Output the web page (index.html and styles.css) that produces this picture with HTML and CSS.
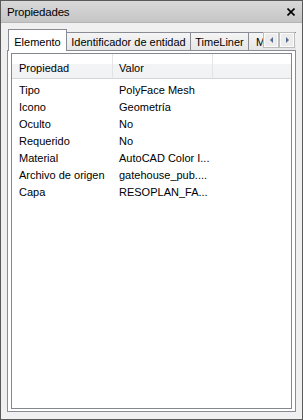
FILE: index.html
```html
<!DOCTYPE html>
<html>
<head>
<meta charset="utf-8">
<link rel="stylesheet" href="styles.css">
</head>
<body>
<div class="window">
  <div class="titlebar">
    <span class="title">Propiedades</span>
    <svg class="close" width="8" height="8" viewBox="0 0 8 8"><path d="M0.5 0.5L7.5 7.5M7.5 0.5L0.5 7.5" stroke="#000" stroke-width="1.6" fill="none"/></svg>
  </div>
  <div class="content">
    <div class="tabstrip">
      <div class="tab sel w1">Elemento</div>
      <div class="tab w2">Identificador de entidad</div>
      <div class="tab w3">TimeLiner</div>
      <div class="tab w4">M</div>
      <div class="scroll">
        <div class="sbtn"><span class="arr left"></span></div>
        <div class="sbtn"><span class="arr right"></span></div>
      </div>
    </div>
    <div class="panel">
      <div class="list">
        <div class="header">
          <div class="hc c1">Propiedad</div>
          <div class="hc c2">Valor</div>
          <div class="hc c3"></div>
        </div>
        <div class="rows">
          <div class="row"><div class="cell c1">Tipo</div><div class="cell c2">PolyFace Mesh</div></div>
          <div class="row"><div class="cell c1">Icono</div><div class="cell c2">Geometría</div></div>
          <div class="row"><div class="cell c1">Oculto</div><div class="cell c2">No</div></div>
          <div class="row"><div class="cell c1">Requerido</div><div class="cell c2">No</div></div>
          <div class="row"><div class="cell c1">Material</div><div class="cell c2">AutoCAD Color I...</div></div>
          <div class="row"><div class="cell c1">Archivo de origen</div><div class="cell c2">gatehouse_pub....</div></div>
          <div class="row"><div class="cell c1">Capa</div><div class="cell c2">RESOPLAN_FA...</div></div>
        </div>
      </div>
    </div>
  </div>
</div>
</body>
</html>
```
FILE: styles.css
```css
html, body {
  margin: 0;
  padding: 0;
}
body {
  font-family: "Liberation Sans", Arial, sans-serif;
  font-size: 11px;
  color: #000;
}
.window {
  width: 303px;
  height: 420px;
  box-sizing: border-box;
  border: 1px solid #5a5a5a;
  background: #f0f0f0;
  display: flex;
  flex-direction: column;
}
.titlebar {
  height: 21px;
  flex: none;
  border-bottom: 1px solid #b4b4b4;
  background: linear-gradient(#d9d9d9, #c5c5c5);
  display: flex;
  align-items: center;
  justify-content: space-between;
  padding: 0 7px 0 6px;
}
.title {
  font-size: 11.5px;
  line-height: 14px;
  padding-top: 1px;
  letter-spacing: -0.2px;
}
.close {
  display: block;
  margin-top: 1px;
}
.content {
  flex: 1;
  display: flex;
  flex-direction: column;
  padding: 6px 6px 7px 6px;
  min-height: 0;
}
.tabstrip {
  height: 22px;
  flex: none;
  display: flex;
  align-items: flex-end;
  padding-left: 1px;
  margin-bottom: -1px;
  position: relative;
  z-index: 1;
  overflow: hidden;
}
.tab {
  flex: none;
  box-sizing: border-box;
  height: 19px;
  border: 1px solid #898c95;
  background: linear-gradient(#f5f5f5, #e6e6e6);
  display: flex;
  align-items: center;
  justify-content: center;
  padding-top: 1px;
  white-space: nowrap;
  overflow: hidden;
}
.tab + .tab {
  margin-left: -1px;
}
.tab.sel {
  height: 22px;
  border-bottom: none;
  background: #fff;
  padding-top: 2px;
  position: relative;
  z-index: 2;
}
.w1 { width: 59px; }
.w2 { width: 125px; }
.w3 { width: 59px; }
.w4 {
  width: 60px;
  justify-content: flex-start;
  padding-left: 7px;
}
.scroll {
  position: absolute;
  right: 1px;
  top: 3px;
  display: flex;
  z-index: 3;
}
.sbtn {
  width: 16px;
  height: 16px;
  box-sizing: border-box;
  border: 1px solid #bcbcbc;
  box-shadow: inset 0 0 0 1px #fbfbfb;
  background: #ececec;
  display: flex;
  align-items: center;
  justify-content: center;
}
.arr {
  width: 0;
  height: 0;
  border-top: 3px solid transparent;
  border-bottom: 3px solid transparent;
}
.arr.left {
  border-right: 3px solid #56698f;
}
.arr.right {
  border-left: 3px solid #56698f;
}
.panel {
  flex: 1;
  display: flex;
  border: 1px solid #898c95;
  background: #fff;
  padding: 2px 3px;
  min-height: 0;
}
.list {
  flex: 1;
  border: 1px solid #828790;
  background: #fff;
  display: flex;
  flex-direction: column;
}
.header {
  height: 24px;
  flex: none;
  display: flex;
  border-bottom: 1px solid #d5d5d5;
  background: linear-gradient(#ffffff 0, #ffffff 40%, #f3f4f5 40%, #f1f2f3 100%);
}
.hc {
  box-sizing: border-box;
  display: flex;
  align-items: center;
  padding-top: 3px;
}
.c1 {
  width: 101px;
  padding-left: 7px;
  flex: none;
}
.c2 {
  width: 100px;
  padding-left: 6px;
  flex: none;
}
.hc.c1, .hc.c2 {
  border-right: 1px solid #e3e4e6;
}
.hc.c3 {
  flex: 1;
}
.rows {
  padding-top: 2px;
}
.row {
  height: 17px;
  display: flex;
  align-items: center;
}
.cell {
  box-sizing: border-box;
  white-space: nowrap;
  overflow: hidden;
}
```
